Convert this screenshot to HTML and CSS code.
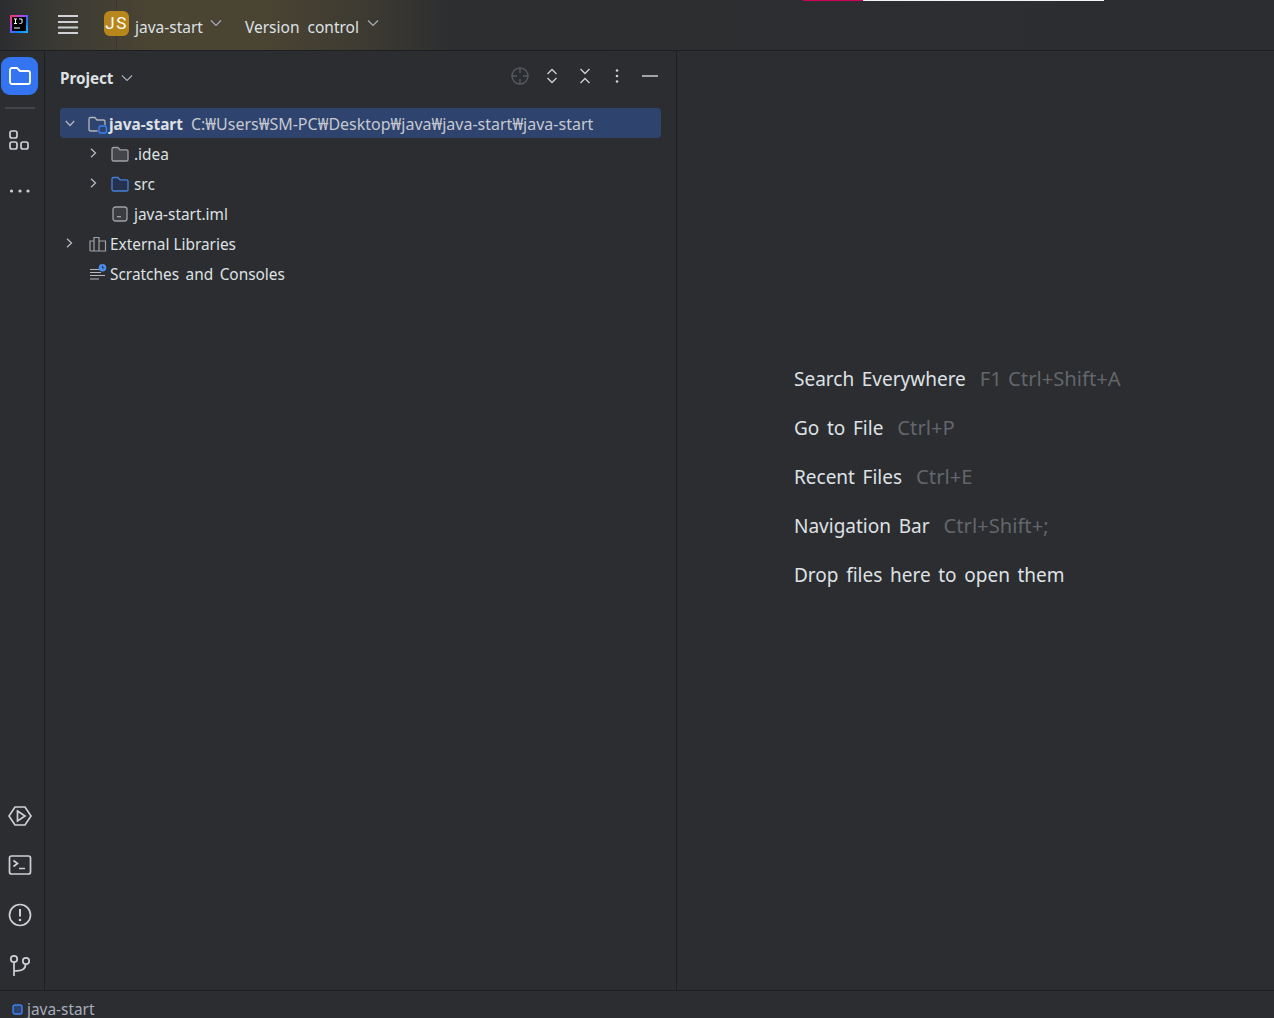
FILE: index.html
```html
<!DOCTYPE html>
<html lang="en">
<head>
<meta charset="utf-8">
<title>java-start</title>
<link rel="stylesheet" href="styles.css">
</head>
<body>
<div class="app">
  <header class="topbar">
    <div class="progress"><span class="progress-red"></span><span class="progress-white"></span></div>
    <svg class="logo" width="18" height="18" viewBox="0 0 18 18">
      <defs><linearGradient id="lg" x1="0" y1="0" x2="1" y2="1"><stop offset="0" stop-color="#fe315d"/><stop offset=".4" stop-color="#a04af7"/><stop offset=".65" stop-color="#087cfa"/><stop offset="1" stop-color="#1fb6ff"/></linearGradient></defs>
      <rect width="18" height="18" fill="url(#lg)"/>
      <rect x="2" y="2" width="14" height="14" fill="#000"/>
      <rect x="4" y="12.5" width="6" height="1" fill="#fff"/>
      <path d="M4 4h3M5.500 4v4.500M4 8.500h3M9 4h3v3.500q0 1-1.500 1h-1" fill="none" stroke="#fff" stroke-width="1"/>
    </svg>
    <svg class="burger" width="20" height="20" viewBox="0 0 20 20"><path d="M0 2h20M0 8h20M0 13.500h20M0 19h20" stroke="#cfd1d6" stroke-width="2"/></svg>
    <div class="badge">JS</div>
    <span class="top-label project-name">java-start</span>
    <svg class="chev top-chev" width="12" height="8" viewBox="0 0 12 8"><path d="M1 1.500l5 5 5-5" fill="none" stroke="#a8adbd" stroke-width="1.200"/></svg>
    <span class="top-label vcs">Version control</span>
    <svg class="chev" width="12" height="8" viewBox="0 0 12 8"><path d="M1 1.500l5 5 5-5" fill="none" stroke="#a8adbd" stroke-width="1.200"/></svg>
  </header>
  <div class="main">
    <nav class="rail">
      <div class="rail-top">
        <div class="rail-active">
          <svg width="24" height="20" viewBox="0 0 24 20"><path d="M2 4a2 2 0 0 1 2-2h5l3 3h8a2 2 0 0 1 2 2v9a2 2 0 0 1-2 2H4a2 2 0 0 1-2-2z" fill="none" stroke="#fff" stroke-width="1.800"/></svg>
        </div>
        <div class="rail-sep"></div>
        <svg class="rail-icon" width="22" height="22" viewBox="0 0 22 22"><g fill="none" stroke="#ced0d6" stroke-width="1.700"><rect x="1" y="1" width="7" height="7" rx="2"/><rect x="1" y="12" width="7" height="7" rx="2"/><rect x="12" y="12" width="7" height="7" rx="2"/></g></svg>
        <svg class="rail-icon more" width="22" height="6" viewBox="0 0 22 6"><g fill="#ced0d6"><circle cx="2.500" cy="3" r="1.600"/><circle cx="11" cy="3" r="1.600"/><circle cx="19" cy="3" r="1.600"/></g></svg>
      </div>
      <div class="rail-bottom">
        <svg class="run-icon" width="24" height="20" viewBox="0 0 24 20"><g fill="none" stroke="#ced0d6" stroke-width="1.700"><path d="M7 1h10l6 9-6 9H7l-6-9z"/><path d="M9.500 5l7.500 5-7.500 5z"/></g></svg>
        <svg class="term-icon" width="24" height="20" viewBox="0 0 24 20"><g fill="none" stroke="#ced0d6" stroke-width="1.700"><rect x="1.500" y="1" width="21" height="18" rx="2"/><path d="M5.500 5.500l4 3-4 3M11 13.500h6"/></g></svg>
        <svg width="24" height="24" viewBox="0 0 24 24"><circle cx="12" cy="12" r="10.500" fill="none" stroke="#ced0d6" stroke-width="1.700"/><path d="M12 6v7.500" stroke="#ced0d6" stroke-width="2"/><circle cx="12" cy="17" r="1.300" fill="#ced0d6"/></svg>
        <svg width="22" height="22" viewBox="0 0 22 22"><g fill="none" stroke="#ced0d6" stroke-width="1.700"><circle cx="5" cy="5" r="3.200"/><circle cx="17" cy="7" r="3.200"/><path d="M5 8.500V22M5 17c7 0 11.500-1 11.500-6.500"/></g></svg>
      </div>
    </nav>
    <section class="panel">
      <div class="panel-head">
        <span class="panel-title">Project</span>
        <svg class="chev" width="12" height="8" viewBox="0 0 12 8"><path d="M1 1.500l5 5 5-5" fill="none" stroke="#a8adbd" stroke-width="1.200"/></svg>
        <div class="panel-tools">
          <svg width="18" height="18" viewBox="0 0 18 18"><g fill="none" stroke="#55585e" stroke-width="1.400"><circle cx="9" cy="9" r="8"/><path d="M9 1v5M9 12v5M1 9h5M12 9h5"/></g></svg>
          <svg width="12" height="16" viewBox="0 0 12 16"><path d="M1.500 6L6 1.500 10.500 6M1.500 10L6 14.500 10.500 10" fill="none" stroke="#ced0d6" stroke-width="1.300"/></svg>
          <svg width="12" height="16" viewBox="0 0 12 16"><path d="M1.500 1L6 5.500 10.500 1M1.500 15L6 10.500 10.500 15" fill="none" stroke="#ced0d6" stroke-width="1.300"/></svg>
          <svg width="4" height="14" viewBox="0 0 4 14"><g fill="#ced0d6"><circle cx="2" cy="1.500" r="1.300"/><circle cx="2" cy="7" r="1.300"/><circle cx="2" cy="12.500" r="1.300"/></g></svg>
          <svg width="16" height="2" viewBox="0 0 16 2"><rect width="16" height="2" fill="#a2a4a8"/></svg>
        </div>
      </div>
      <ul class="tree">
        <li class="row row-selected">
          <svg class="twist" width="10" height="7" viewBox="0 0 10 7"><path d="M.8 1l4.200 4.500L9.200 1" fill="none" stroke="#b4b8bf" stroke-width="1.300"/></svg>
          <svg class="node-icon mod" width="22" height="20" viewBox="0 0 22 20"><path d="M9.500 17H2.500A1.500 1.500 0 0 1 1 15.500V5A1.500 1.500 0 0 1 2.500 3.500h4.300l2.200 2.500h6.500A1.500 1.500 0 0 1 17 7.500V11" fill="none" stroke="#b4b8bf" stroke-width="1.300"/><rect x="11" y="12" width="7.500" height="7" rx="2" fill="#2e436e" stroke="#3b82f6" stroke-width="1.300"/></svg>
          <span class="bold">java-start</span><span class="path">C:₩Users₩SM-PC₩Desktop₩java₩java-start₩java-start</span>
        </li>
        <li class="row indent-2">
          <svg class="twist side" width="7" height="10" viewBox="0 0 7 10"><path d="M1 .8L5.500 5 1 9.200" fill="none" stroke="#b4b8bf" stroke-width="1.300"/></svg>
          <svg class="node-icon" width="18" height="16" viewBox="0 0 18 16"><path d="M1 3a1.500 1.500 0 0 1 1.500-1.500h4.300L9 3.800h6.500A1.500 1.500 0 0 1 17 5.300v8A1.500 1.500 0 0 1 15.500 15h-13A1.500 1.500 0 0 1 1 13.500z" fill="#43454a" stroke="#9ea1a7" stroke-width="1.300"/></svg>
          <span>.idea</span>
        </li>
        <li class="row indent-2">
          <svg class="twist side" width="7" height="10" viewBox="0 0 7 10"><path d="M1 .8L5.500 5 1 9.200" fill="none" stroke="#b4b8bf" stroke-width="1.300"/></svg>
          <svg class="node-icon" width="18" height="16" viewBox="0 0 18 16"><path d="M1 3a1.500 1.500 0 0 1 1.500-1.500h4.300L9 3.800h6.500A1.500 1.500 0 0 1 17 5.300v8A1.500 1.500 0 0 1 15.500 15h-13A1.500 1.500 0 0 1 1 13.500z" fill="#25324d" stroke="#4a7ed8" stroke-width="1.300"/></svg>
          <span>src</span>
        </li>
        <li class="row indent-3">
          <svg class="node-icon" width="18" height="16" viewBox="0 0 18 16"><rect x="2" y="1" width="14" height="14" rx="2.500" fill="#3a3c40" stroke="#9ea1a7" stroke-width="1.300"/><rect x="6" y="10" width="4" height="1.300" fill="#9ea1a7"/></svg>
          <span>java-start.iml</span>
        </li>
        <li class="row indent-1">
          <svg class="twist side" width="7" height="10" viewBox="0 0 7 10"><path d="M1 .8L5.500 5 1 9.200" fill="none" stroke="#b4b8bf" stroke-width="1.300"/></svg>
          <svg class="node-icon lib" width="18" height="16" viewBox="0 0 18 16"><path d="M1 15V5h4v10M5 15V1.500h5V15M10 15V5h6.500v10zM1 15h15.500" fill="none" stroke="#9ea1a7" stroke-width="1.200"/></svg>
          <span>External Libraries</span>
        </li>
        <li class="row indent-4">
          <svg class="node-icon lib" width="18" height="20" viewBox="0 0 18 20"><path d="M1 5.500h9M1 8.500h11M1 11.500h15M1 15h9" stroke="#b4b8bf" stroke-width="1.200"/><circle cx="13.500" cy="3.800" r="3.800" fill="#4a8cf0"/><path d="M13.500 1.800V4h1.700" fill="none" stroke="#1e1f22" stroke-width=".8"/></svg>
          <span class="wide">Scratches and Consoles</span>
        </li>
      </ul>
    </section>
    <section class="editor">
      <div class="hints">
        <p class="hint"><span>Search Everywhere</span><span class="keys">F1 Ctrl+Shift+A</span></p>
        <p class="hint"><span>Go to File</span><span class="keys">Ctrl+P</span></p>
        <p class="hint"><span>Recent Files</span><span class="keys">Ctrl+E</span></p>
        <p class="hint"><span>Navigation Bar</span><span class="keys">Ctrl+Shift+;</span></p>
        <p class="hint"><span>Drop files here to open them</span></p>
      </div>
    </section>
  </div>
  <footer class="status">
    <svg width="11" height="11" viewBox="0 0 11 11"><rect x="1" y="1" width="9" height="9" rx="2" fill="#2e436e" stroke="#3b82f6" stroke-width="1.400"/></svg>
    <span>java-start</span>
  </footer>
</div>
</body>
</html>
```
FILE: styles.css
```css
* { box-sizing: border-box; }
html, body { margin: 0; padding: 0; height: 100%; overflow: hidden; }
body {
  background: #2b2d30;
  color: #ced0d6;
  font-family: "Noto Sans", "Noto Sans CJK KR", "Liberation Sans", sans-serif;
  font-size: 15.4px;
}
.app { display: flex; flex-direction: column; height: 1018px; }

.topbar {
  position: relative;
  flex: 0 0 51px;
  display: flex;
  align-items: center;
  padding: 0 0 0 10px;
  border-bottom: 1px solid #1e1f22;
  background:
    linear-gradient(#37362f, #37362f) 116px 0 / 1px 100% no-repeat,
    linear-gradient(90deg, #2b2d30 0, #3b3a33 60px, #4a4433 150px, #4a4433 260px, #3e3b32 360px, #2d2e30 450px, #2b2d30 100%);
}
.progress { position: absolute; top: 0; left: 803px; display: flex; height: 1px; }
.progress-red { width: 60px; background: #d1005a; }
.progress-white { width: 241px; background: #f2f2f2; }
.logo { margin-top: -3px; }
.burger { margin: -3px 0 0 30px; }
.badge {
  width: 25px;
  height: 25px;
  margin: -3px 0 0 26px;
  border-radius: 6px;
  background: #b8861b;
  color: #fff;
  font-family: Roboto, sans-serif;
  font-size: 17px;
  letter-spacing: 1.5px;
  line-height: 25px;
  text-align: center;
}
.top-label { font-size: 15.5px; color: #dfe1e5; margin-top: 4px; }
.project-name { margin-left: 6px; }
.chev { flex: none; }
.top-chev { margin-left: 7px; }
.vcs { margin-left: 23px; margin-right: 8px; word-spacing: 4px; }
.topbar .chev { margin-top: -4px; }

.main { flex: 1; display: flex; min-height: 0; }

.rail {
  flex: 0 0 45px;
  display: flex;
  flex-direction: column;
  justify-content: space-between;
  align-items: center;
  border-right: 1px solid #1e1f22;
  padding: 6px 5px 14px 0;
}
.rail-top, .rail-bottom { display: flex; flex-direction: column; align-items: center; }
.rail-active {
  width: 37px;
  height: 38px;
  border-radius: 9px;
  background: #3574f0;
  display: flex;
  align-items: center;
  justify-content: center;
}
.rail-sep { width: 30px; height: 2px; margin-top: 12px; background: #43454a; }
.rail-icon { margin-top: 21px; }
.rail-icon.more { margin-top: 36px; }
.rail-bottom { gap: 27px; }
.run-icon { margin-bottom: 2px; }
.term-icon { margin-bottom: 1px; }

.panel {
  flex: 0 0 632px;
  border-right: 1px solid #1e1f22;
  padding-left: 15px;
}
.panel-head { display: flex; align-items: center; height: 57px; padding-right: 10px; }
.panel-title { font-weight: 700; font-size: 15.2px; color: #dfe1e5; margin: -3px 8px 0 0; }
.panel-head > .chev { margin-top: -3px; }
.panel-tools {
  margin: -7px 0 0 auto;
  display: grid;
  grid-template-columns: repeat(5, 32.5px);
  justify-items: center;
  align-items: center;
}

.tree { list-style: none; margin: 0; padding: 0; width: 601px; }
.row { display: flex; align-items: center; height: 30px; padding-top: 2px; white-space: nowrap; color: #dfe1e5; }
.row-selected { background: #2e436e; border-radius: 4px; padding-left: 5px; }
.twist { flex: none; margin: -2px 13px 0 0; }
.twist.side { margin-right: 14px; }
.node-icon { flex: none; margin-right: 5px; }
.lib { margin-right: 3px; }
.indent-1 .lib { margin-left: 2px; }
.mod { margin-right: 0; }
.bold { font-weight: 700; margin-right: 8px; margin-left: -1px; }
.path { color: #c6c9d0; font-size: 16px; }
.indent-1 { padding-left: 6px; }
.indent-2 { padding-left: 30px; }
.indent-3 { padding-left: 51px; }
.indent-4 { padding-left: 29px; }
.wide { word-spacing: 2.5px; }

.editor { flex: 1; position: relative; }
.hints { padding: 314px 0 0 117px; }
.hint { margin: 0 0 20px; height: 29px; display: flex; font-size: 19px; line-height: 29px; color: #dfe1e5; white-space: nowrap; word-spacing: 2.7px; }
.keys { margin: -1px 0 0 14px; color: #63666b; font-size: 20.2px; word-spacing: 1px; }

.status {
  flex: 0 0 28px;
  display: flex;
  align-items: center;
  gap: 4px;
  padding: 10px 0 0 12px;
  border-top: 1px solid #1e1f22;
  color: #a8adbd;
  font-size: 15.4px;
  line-height: 17px;
}
```
